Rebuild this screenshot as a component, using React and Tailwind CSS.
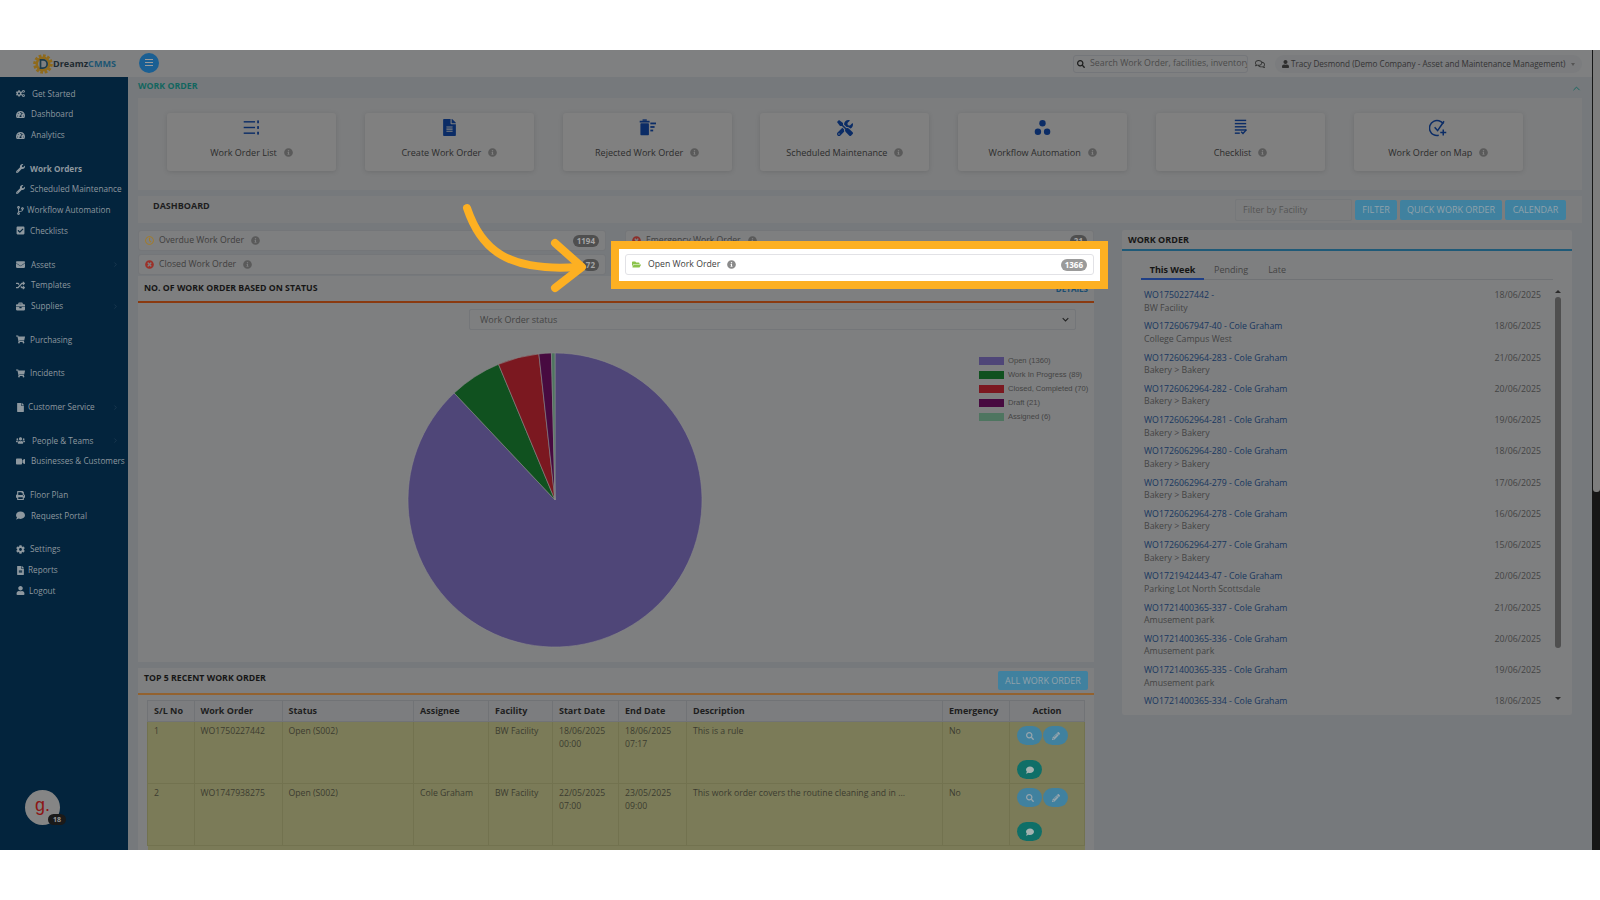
import {
  FaBriefcase,
  FaCheckSquare,
  FaCodeBranch,
  FaCog,
  FaCogs,
  FaComment,
  FaEnvelope,
  FaFile,
  FaFileAlt,
  FaFolderOpen,
  FaInfoCircle,
  FaPencilAlt,
  FaPrint,
  FaRandom,
  FaRegClock,
  FaRegComments,
  FaSearch,
  FaShoppingCart,
  FaTachometerAlt,
  FaTimesCircle,
  FaTools,
  FaUser,
  FaUsers,
  FaVideo,
  FaWrench,
} from "react-icons/fa";
import { FiChevronRight, FiChevronUp } from "react-icons/fi";

const navGroups = [
  [
    { name: "Get Started", icon: FaCogs, gap: "w-[16px]" },
    { name: "Dashboard", icon: FaTachometerAlt, gap: "w-[15px]" },
    { name: "Analytics", icon: FaTachometerAlt, gap: "w-[15px]" },
  ],
  [
    { name: "Work Orders", icon: FaWrench, gap: "w-[14px]", bold: true },
    { name: "Scheduled Maintenance", icon: FaWrench, gap: "w-[14px]" },
    { name: "Workflow Automation", icon: FaCodeBranch, gap: "w-[11px]" },
    { name: "Checklists", icon: FaCheckSquare, gap: "w-[14px]" },
  ],
  [
    { name: "Assets", icon: FaEnvelope, gap: "w-[15px]", more: true },
    { name: "Templates", icon: FaRandom, gap: "w-[15px]" },
    { name: "Supplies", icon: FaBriefcase, gap: "w-[15px]", more: true },
  ],
  [{ name: "Purchasing", icon: FaShoppingCart, gap: "w-[14px]" }],
  [{ name: "Incidents", icon: FaShoppingCart, gap: "w-[14px]" }],
  [{ name: "Customer Service", icon: FaFile, gap: "w-[12px]", more: true }],
  [
    { name: "People & Teams", icon: FaUsers, gap: "w-[16px]", more: true },
    { name: "Businesses & Customers", icon: FaVideo, gap: "w-[15px]" },
  ],
  [
    { name: "Floor Plan", icon: FaPrint, gap: "w-[14px]" },
    { name: "Request Portal", icon: FaComment, gap: "w-[15px]" },
  ],
  [
    { name: "Settings", icon: FaCog, gap: "w-[14px]" },
    { name: "Reports", icon: FaFileAlt, gap: "w-[12px]" },
    { name: "Logout", icon: FaUser, gap: "w-[13px]" },
  ],
];

const ListIcon = () => (
  <svg viewBox="0 0 24 24" className="h-[17px] w-[17px] fill-[#0b2c66]">
    <rect x="1" y="3" width="16" height="2" />
    <rect x="1" y="11" width="16" height="2" />
    <rect x="1" y="19" width="16" height="2" />
    <rect x="20" y="2" width="2.5" height="4" />
    <rect x="20" y="10" width="2.5" height="4" />
    <rect x="20" y="18" width="2.5" height="4" />
  </svg>
);

const RejectedIcon = () => (
  <svg viewBox="0 0 24 24" className="h-[17px] w-[17px] fill-[#0b2c66]">
    <rect x="2" y="6" width="12" height="17" rx="1" />
    <rect x="1" y="2.5" width="14" height="2.5" />
    <rect x="5" y="0.5" width="6" height="2" />
    <rect x="16" y="5" width="8" height="2.5" />
    <rect x="16" y="10" width="6" height="2.5" />
    <rect x="16" y="15" width="4" height="2.5" />
  </svg>
);

const WorkflowIcon = () => (
  <svg viewBox="0 0 24 24" className="h-[17px] w-[17px] fill-[#0b2c66]">
    <circle cx="12" cy="6" r="4.5" />
    <circle cx="5.5" cy="18" r="4.5" />
    <circle cx="18.5" cy="18" r="4.5" />
  </svg>
);

const ChecklistIcon = () => (
  <svg viewBox="0 0 24 24" className="h-[17px] w-[17px] fill-[#0b2c66]">
    <rect x="4" y="1" width="16" height="2" />
    <rect x="4" y="5.5" width="16" height="2" />
    <rect x="4" y="10" width="16" height="2" />
    <rect x="4" y="14.5" width="16" height="2" />
    <rect x="4" y="19" width="7" height="2" />
    <path d="M13 18l2.5 2.5L20.5 15" fill="none" stroke="#0b2c66" strokeWidth="2" />
  </svg>
);

const MapCheckIcon = () => (
  <svg viewBox="0 0 24 24" fill="none" stroke="#0b2c66" strokeWidth="2" className="h-[18px] w-[18px]">
    <path d="M19 6.5A10 10 0 1 0 13 21.8" />
    <path d="M7.5 11l4 4.5L20 3" />
    <path d="M19 14v8M15 18h8" />
  </svg>
);

const shortcuts = [
  { name: "Work Order List", icon: <ListIcon /> },
  { name: "Create Work Order", icon: <FaFileAlt className="h-[17px] w-[15px] text-[#0b2c66]" /> },
  { name: "Rejected Work Order", icon: <RejectedIcon /> },
  { name: "Scheduled Maintenance", icon: <FaTools className="h-[16px] w-[16px] text-[#0b2c66]" /> },
  { name: "Workflow Automation", icon: <WorkflowIcon /> },
  { name: "Checklist", icon: <ChecklistIcon /> },
  { name: "Work Order on Map", icon: <MapCheckIcon /> },
];

const legend = [
  { name: "Open (1360)", color: "bg-[#4f4678]" },
  { name: "Work In Progress (89)", color: "bg-[#10511f]" },
  { name: "Closed, Completed (70)", color: "bg-[#7b1820]" },
  { name: "Draft (21)", color: "bg-[#470a40]" },
  { name: "Assigned (6)", color: "bg-[#4e7560]" },
];

const weekOrders = [
  ["WO1750227442 -", "BW Facility", "18/06/2025"],
  ["WO1726067947-40 - Cole Graham", "College Campus West", "18/06/2025"],
  ["WO1726062964-283 - Cole Graham", "Bakery > Bakery", "21/06/2025"],
  ["WO1726062964-282 - Cole Graham", "Bakery > Bakery", "20/06/2025"],
  ["WO1726062964-281 - Cole Graham", "Bakery > Bakery", "19/06/2025"],
  ["WO1726062964-280 - Cole Graham", "Bakery > Bakery", "18/06/2025"],
  ["WO1726062964-279 - Cole Graham", "Bakery > Bakery", "17/06/2025"],
  ["WO1726062964-278 - Cole Graham", "Bakery > Bakery", "16/06/2025"],
  ["WO1726062964-277 - Cole Graham", "Bakery > Bakery", "15/06/2025"],
  ["WO1721942443-47 - Cole Graham", "Parking Lot North Scottsdale", "20/06/2025"],
  ["WO1721400365-337 - Cole Graham", "Amusement park", "21/06/2025"],
  ["WO1721400365-336 - Cole Graham", "Amusement park", "20/06/2025"],
  ["WO1721400365-335 - Cole Graham", "Amusement park", "19/06/2025"],
  ["WO1721400365-334 - Cole Graham", "", "18/06/2025"],
];

const recentOrders = [
  {
    no: 1,
    order: "WO1750227442",
    assignee: "",
    start: ["18/06/2025", "00:00"],
    end: ["18/06/2025", "07:17"],
    description: "This is a rule",
  },
  {
    no: 2,
    order: "WO1747938275",
    assignee: "Cole Graham",
    start: ["22/05/2025", "07:00"],
    end: ["23/05/2025", "09:00"],
    description: "This work order covers the routine cleaning and in ...",
  },
];

const tableHeads = ["S/L No", "Work Order", "Status", "Assignee", "Facility", "Start Date", "End Date", "Description", "Emergency"];

const Info = ({ className = "ml-[7px] text-[#5a5a5a]" }) => (
  <FaInfoCircle className={`h-[9px] w-[9px] shrink-0 ${className}`} />
);

// slices of the status pie, clockwise from the top
const pieSlice = (from, to) => {
  const cx = 150;
  const cy = 150;
  const r = 147;
  const a = ((from - 90) * Math.PI) / 180;
  const b = ((to - 90) * Math.PI) / 180;
  const large = to - from > 180 ? 1 : 0;
  return `M${cx} ${cy}L${cx + r * Math.cos(a)} ${cy + r * Math.sin(a)}A${r} ${r} 0 ${large} 1 ${cx + r * Math.cos(b)} ${cy + r * Math.sin(b)}Z`;
};

const Sidebar = () => (
  <aside className="flex h-full w-[128px] shrink-0 flex-col bg-[#03243d] pl-[16px] pt-[6.5px] text-[8.2px] text-[#8e989f]">
    {navGroups.map((group, i) => (
      <div className="mb-[13px]" key={i}>
        {group.map((item) => {
          const Icon = item.icon;
          return (
            <div className="flex h-[20.7px] items-center" key={item.name}>
              <span className={`flex shrink-0 ${item.gap}`}>
                <Icon className="h-[9px] w-[9px] shrink-0" />
              </span>
              <span className={`whitespace-nowrap ${item.bold ? "font-bold" : ""}`}>{item.name}</span>
              {item.more && <FiChevronRight className="ml-auto mr-[9px] h-[7px] w-[7px] text-[#28445a]" />}
            </div>
          );
        })}
      </div>
    ))}

    <div className="relative ml-[9px] mt-auto mb-[25px] flex h-[35px] w-[35px] items-center justify-center rounded-full bg-[#858585]">
      <span className="mb-[5px] font-['Liberation_Sans',sans-serif] text-[18px] leading-none text-[#8c1515]">g.</span>
      <span className="absolute -right-[6px] bottom-[0px] rounded-full bg-[#1a1a1a] px-[5px] text-[7px] font-bold leading-[11px] text-[#9a9a9a]">
        18
      </span>
    </div>
  </aside>
);

const TopBar = () => (
  <header className="flex h-[27px] shrink-0 items-center bg-[#7f8081]">
    <div className="ml-[33px] flex items-center">
      <svg viewBox="0 0 24 24" className="h-[20px] w-[20px]">
        <circle cx="12" cy="12" r="10" fill="none" stroke="#8f6a1c" strokeWidth="3.5" strokeDasharray="3.2 2" />
        <circle cx="12" cy="12" r="7.5" fill="none" stroke="#8f6a1c" strokeWidth="3" />
        <path d="M9 7h3a5 5 0 0 1 0 10H9z" fill="none" stroke="#1d3b4a" strokeWidth="2" />
      </svg>
      <span className="text-[9.1px] font-bold leading-none text-[#1e2a30]">Dreamz</span>
      <span className="text-[9.1px] font-bold leading-none text-[#1d5673]">CMMS</span>
    </div>
    <div className="mb-[2px] ml-[23px] flex h-[20px] w-[20px] items-center justify-center rounded-full bg-[#1a5f93]">
      <div className="flex w-[8px] flex-col gap-[1.5px]">
        <span className="h-[1.5px] bg-[#9a9a9a]" />
        <span className="h-[1.5px] bg-[#9a9a9a]" />
        <span className="h-[1.5px] bg-[#9a9a9a]" />
      </div>
    </div>

    <div className="ml-auto flex h-[18px] w-[175px] items-center overflow-hidden rounded-[3px] border border-[#74767a] pl-[3px] pt-[1px]">
      <FaSearch className="h-[8px] w-[8px] shrink-0 text-[#1d1d1d]" />
      <span className="ml-[5px] whitespace-nowrap text-[8.8px] text-[#4b4b4b]">Search Work Order, facilities, inventory</span>
    </div>
    <FaRegComments className="ml-[7px] h-[10px] w-[10px] text-[#333]" />
    <div className="ml-[10px] mr-[10px] flex h-[18px] w-[307px] items-center rounded-full bg-[#7b7c7e] pl-[7px] pt-[1px]">
      <FaUser className="h-[8px] w-[7px] shrink-0 text-[#2f2f2f]" />
      <span className="ml-[2px] whitespace-nowrap text-[8.15px] text-[#333]">
        Tracy Desmond (Demo Company - Asset and Maintenance Management)
      </span>
      <span className="ml-[5px] h-0 w-0 border-x-[2px] border-t-[3px] border-x-transparent border-t-[#555]" />
    </div>
  </header>
);

const StatRow = ({ icon, name, count, gap = "ml-[5px]", info, badge = "bg-[#4f4f4f]", className = "" }) => (
  <div className={`flex h-[21px] items-center rounded-[3px] border border-[#747679] bg-[#7e7f80] px-[6px] ${className}`}>
    {icon}
    <span className={`text-[8.7px] text-[#3e3e3e] ${gap}`}>{name}</span>
    <Info className={info} />
    <span className={`ml-auto rounded-full px-[4px] text-[8px] font-bold leading-[12px] text-[#a5a5a5] ${badge}`}>{count}</span>
  </div>
);

const ActionButton = ({ color, children }) => (
  <span className={`flex h-[19px] w-[25px] items-center justify-center rounded-full ${color}`}>{children}</span>
);

const RecentTable = () => (
  <table className="ml-[9px] mt-[5px] w-[937px] table-fixed border-collapse text-[8.7px] text-[#3c3c30]">
    <colgroup>
      <col className="w-[46.5px]" />
      <col className="w-[88px]" />
      <col className="w-[131.5px]" />
      <col className="w-[75px]" />
      <col className="w-[64px]" />
      <col className="w-[66px]" />
      <col className="w-[68px]" />
      <col className="w-[256px]" />
      <col className="w-[67px]" />
      <col className="w-[75px]" />
    </colgroup>
    <thead>
      <tr className="h-[21px] bg-[#7c7d7f] text-left text-[9px] text-[#1e1e1e]">
        {tableHeads.map((head) => (
          <th className="border border-[#717376] px-[6px] font-bold" key={head}>
            {head}
          </th>
        ))}
        <th className="border border-[#717376] px-[6px] text-center font-bold">Action</th>
      </tr>
    </thead>
    <tbody>
      {recentOrders.map((row) => (
        <tr className="h-[62px] bg-[#7b7b58] align-top" key={row.no}>
          <td className="border border-[#72724f] px-[6px] pt-[3px]">{row.no}</td>
          <td className="border border-[#72724f] px-[6px] pt-[3px]">{row.order}</td>
          <td className="border border-[#72724f] px-[6px] pt-[3px]">Open (S002)</td>
          <td className="border border-[#72724f] px-[6px] pt-[3px]">{row.assignee}</td>
          <td className="border border-[#72724f] px-[6px] pt-[3px]">BW Facility</td>
          <td className="border border-[#72724f] px-[6px] pt-[3px] leading-[12.5px]">
            {row.start[0]}
            <br />
            {row.start[1]}
          </td>
          <td className="border border-[#72724f] px-[6px] pt-[3px] leading-[12.5px]">
            {row.end[0]}
            <br />
            {row.end[1]}
          </td>
          <td className="whitespace-nowrap border border-[#72724f] px-[6px] pt-[3px]">{row.description}</td>
          <td className="border border-[#72724f] px-[6px] pt-[3px]">No</td>
          <td className="border border-[#72724f] pl-[7px] pt-[4px]">
            <div className="flex gap-[1px]">
              <ActionButton color="bg-[#40819f]">
                <FaSearch className="h-[8px] w-[8px] text-[#96a5ad]" />
              </ActionButton>
              <ActionButton color="bg-[#40819f]">
                <FaPencilAlt className="h-[8px] w-[8px] text-[#96a5ad]" />
              </ActionButton>
            </div>
            <div className="mt-[15px]">
              <ActionButton color="bg-[#0f6f68]">
                <FaComment className="h-[8px] w-[8px] text-[#a3b2b0]" />
              </ActionButton>
            </div>
          </td>
        </tr>
      ))}
      <tr className="h-[20px] bg-[#7b7b58]">
        <td colSpan={10} />
      </tr>
    </tbody>
  </table>
);

const App = () => {
  return (
    <div className="relative flex h-screen flex-col overflow-hidden bg-white font-['Open_Sans',sans-serif]">
      <div className="h-[50px] shrink-0" />

      <div className="flex h-[800px] shrink-0 overflow-hidden">
        <div className="flex min-w-0 flex-1 flex-col">
          <TopBar />

          <div className="flex min-h-0 flex-1">
            <Sidebar />

            <main className="min-w-0 flex-1 bg-[#76797c] pl-[10px] pr-[10px]">
              <div className="flex h-[21px] items-center">
                <h1 className="mb-[1px] text-[8.8px] font-bold text-[#12665f]">WORK ORDER</h1>
                <FiChevronUp className="ml-auto mt-[2px] h-[11px] w-[11px] text-[#12665f]" />
              </div>

              {/* shortcuts */}
              <div className="flex h-[92px] gap-[28.8px] bg-[#7c7d7e] pl-[29px] pt-[15px]">
                {shortcuts.map((item) => (
                  <div
                    className="flex h-[58px] w-[169px] flex-col items-center rounded-[3px] bg-[#808080] pt-[5px] shadow-[0_1px_5px_rgba(0,0,0,0.12)]"
                    key={item.name}
                  >
                    <div className="flex h-[19px] items-center">{item.icon}</div>
                    <div className="mt-[9px] flex items-center text-[9.05px] text-[#2c2c2c]">
                      {item.name}
                      <Info />
                    </div>
                  </div>
                ))}
              </div>

              <div className="mt-[6px] flex h-[27px] items-center bg-[#7c7d7e] pl-[15px] pr-[16px]">
                <h2 className="mb-[8px] text-[9px] font-bold text-[#1e1e1e]">DASHBOARD</h2>
                <div className="ml-auto flex h-[22px] w-[117px] items-center rounded-[2px] border border-[#76787a] pl-[7px] text-[9px] text-[#555]">
                  Filter by Facility
                </div>
                <button className="ml-[3px] h-[20px] w-[42px] rounded-[2px] bg-[#40819f] text-[9px] text-[#90a2ab]">FILTER</button>
                <button className="ml-[3px] h-[20px] w-[102px] rounded-[2px] bg-[#40819f] text-[9px] text-[#90a2ab]">QUICK WORK ORDER</button>
                <button className="ml-[3px] h-[20px] w-[61px] rounded-[2px] bg-[#40819f] text-[9px] text-[#90a2ab]">CALENDAR</button>
              </div>

              <div className="mt-[7px] flex gap-[28px]">
                {/* left column */}
                <div className="w-[956px] shrink-0">
                  <div className="grid grid-cols-[468px_469px] gap-x-[19px] gap-y-[3px]">
                    <StatRow icon={<FaRegClock className="h-[9px] w-[9px] text-[#a67c22]" />} name="Overdue Work Order" count="1194" />
                    <StatRow icon={<FaTimesCircle className="h-[9px] w-[9px] text-[#8c2f2a]" />} name="Emergency Work Order" count="21" />
                    <StatRow icon={<FaTimesCircle className="h-[9px] w-[9px] text-[#9c3028]" />} name="Closed Work Order" count="72" />
                    <StatRow
                      className="relative z-20 !border-[#e2e2e6] !bg-white"
                      icon={<FaFolderOpen className="h-[9px] w-[9px] text-[#8bc34a]" />}
                      name="Open Work Order"
                      count="1366"
                      gap="ml-[7px]"
                      info="ml-[7px] text-[#8a8a8a]"
                      badge="!bg-[#9a9a9a] !text-white"
                    />
                  </div>

                  <section className="mt-[1px] h-[386px] bg-[#7e7f80]">
                    <div className="flex h-[27px] items-center justify-between border-b-2 border-[#8a3a10] pl-[6px] pr-[6px]">
                      <h3 className="text-[8.75px] font-bold text-[#161616]">NO. OF WORK ORDER BASED ON STATUS</h3>
                      <span className="text-[8px] font-bold text-[#1a4d70]">DETAILS</span>
                    </div>

                    <div className="ml-[331px] mt-[6px] flex h-[21px] w-[607px] items-center rounded-[2px] border border-[#747679] pl-[10px] pr-[6px] text-[9px] text-[#444]">
                      Work Order status
                      <svg viewBox="0 0 10 6" className="ml-auto h-[5px] w-[7px]">
                        <path d="M1 1l4 4 4-4" fill="none" stroke="#222" strokeWidth="1.5" />
                      </svg>
                    </div>

                    <div className="flex">
                      <svg viewBox="0 0 300 300" className="ml-[267px] mt-[20px] h-[300px] w-[300px] shrink-0">
                        <path d={pieSlice(0, 316.7)} fill="#4f4678" stroke="#8a8a8a" strokeWidth="0.6" />
                        <path d={pieSlice(316.7, 337.4)} fill="#10511f" stroke="#8a8a8a" strokeWidth="0.6" />
                        <path d={pieSlice(337.4, 353.7)} fill="#7b1820" stroke="#8a8a8a" strokeWidth="0.6" />
                        <path d={pieSlice(353.7, 358.6)} fill="#470a40" stroke="#8a8a8a" strokeWidth="0.6" />
                        <path d={pieSlice(358.6, 360)} fill="#4e7560" stroke="#8a8a8a" strokeWidth="0.6" />
                      </svg>
                      <ul className="ml-[274px] mt-[24px] font-['Liberation_Sans',sans-serif] text-[7.6px] text-[#444]">
                        {legend.map((item) => (
                          <li className="flex h-[13.9px] items-center whitespace-nowrap" key={item.name}>
                            <span className={`mr-[4px] h-[8px] w-[25px] ${item.color}`} />
                            {item.name}
                          </li>
                        ))}
                      </ul>
                    </div>
                  </section>

                  <section className="mt-[6px] bg-[#7e7f80] pb-[40px]">
                    <div className="flex h-[27px] items-start justify-between border-b-2 border-[#93622f] pl-[6px] pr-[6px]">
                      <h3 className="mt-[4px] text-[8.75px] font-bold text-[#161616]">TOP 5 RECENT WORK ORDER</h3>
                      <button className="mt-[3px] h-[19px] w-[90px] rounded-[2px] bg-[#40819f] text-[9px] text-[#90a2ab]">ALL WORK ORDER</button>
                    </div>
                    <RecentTable />
                  </section>
                </div>

                {/* right column */}
                <section className="h-[485px] w-[450px] shrink-0 overflow-hidden rounded-[2px] bg-[#7e7f80]">
                  <div className="flex h-[21px] items-center border-b-2 border-[#1f5a78] pl-[6px]">
                    <h3 className="text-[9px] font-bold text-[#161616]">WORK ORDER</h3>
                  </div>

                  <div className="ml-[19px] mt-[10px] flex h-[19px] w-[412px] items-center border-b border-[#707275] text-[9px] text-[#444]">
                    <span className="-mb-[1px] flex h-[19px] w-[63px] items-center justify-center border-b-2 border-[#1f3f86] font-bold text-[#151515]">
                      This Week
                    </span>
                    <span className="ml-[10px]">Pending</span>
                    <span className="ml-[20px]">Late</span>
                  </div>

                  <div className="flex">
                    <ul className="ml-[22px] mt-[9px] w-[397px] text-[8.75px]">
                      {weekOrders.map(([title, place, date]) => (
                        <li className="flex h-[31.25px] justify-between" key={title}>
                          <div className="leading-[12.5px]">
                            <div className="text-[#17365f]">{title}</div>
                            <div className="text-[#444]">{place}</div>
                          </div>
                          <span className="leading-[12.5px] text-[#444]">{date}</span>
                        </li>
                      ))}
                    </ul>
                    {/* list scrollbar */}
                    <div className="ml-[14px] mt-[10px] flex w-[6px] flex-col items-center">
                      <span className="h-0 w-0 border-x-[3px] border-b-[3px] border-x-transparent border-b-[#2b2b2b]" />
                      <span className="mt-[4px] h-[351px] w-[6px] rounded-full bg-[#4f4f4f]" />
                      <span className="mt-[49px] h-0 w-0 border-x-[3px] border-t-[3px] border-x-transparent border-t-[#2b2b2b]" />
                    </div>
                  </div>
                </section>
              </div>
            </main>
          </div>
        </div>

        {/* page scrollbar */}
        <div className="w-[8px] shrink-0 bg-[#161616]">
          <div className="ml-[1px] h-[442px] w-[7px] rounded-b-[3px] bg-[#7d7d7d]" />
        </div>
      </div>

      <div className="h-[50px] shrink-0" />

      {/* tour highlight around the Open Work Order row */}
      <div className="absolute left-[611px] top-[241px] z-10 h-[48px] w-[497px] border-[8px] border-[#fdb022] bg-white" />
      <svg viewBox="0 0 1600 900" className="pointer-events-none absolute left-0 top-0 z-30 h-[900px] w-[1600px]">
        <path d="M467 208C481 250 508 272 578 267" fill="none" stroke="#fdb022" strokeWidth="8" strokeLinecap="round" />
        <path d="M555 243L582 267L555 288" fill="none" stroke="#fdb022" strokeWidth="8" strokeLinecap="round" strokeLinejoin="round" />
      </svg>
    </div>
  );
};

export default App;
